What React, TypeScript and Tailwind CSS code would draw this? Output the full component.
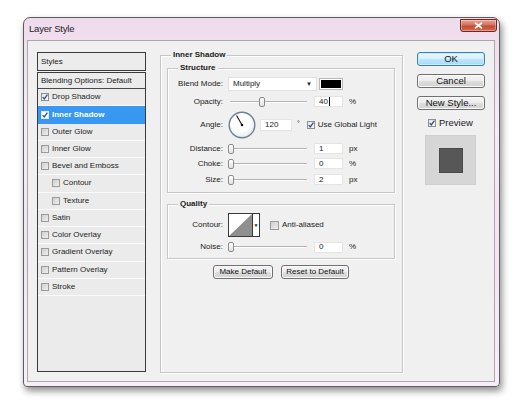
const EFFECTS = [
  { label: "Drop Shadow", on: true },
  { label: "Inner Shadow", on: true, active: true },
  { label: "Outer Glow" },
  { label: "Inner Glow" },
  { label: "Bevel and Emboss" },
  { label: "Contour", sub: true },
  { label: "Texture", sub: true },
  { label: "Satin" },
  { label: "Color Overlay" },
  { label: "Gradient Overlay" },
  { label: "Pattern Overlay" },
  { label: "Stroke" },
];

function Check({ on, light }: { on?: boolean; light?: boolean }) {
  return (
    <span
      className={
        light
          ? "flex h-[8px] w-[8px] shrink-0 items-center justify-center border border-[#dfe9f5] bg-white"
          : on
            ? "flex h-[8px] w-[8px] shrink-0 items-center justify-center border border-[#8e8f8f] bg-[linear-gradient(135deg,#e6e6e6,#fbfbfb)]"
            : "flex h-[8px] w-[8px] shrink-0 items-center justify-center border border-[#9a9a9a] bg-[linear-gradient(135deg,#cfcfcf,#efefef)]"
      }
    >
      {on && (
        <svg width="6" height="6" viewBox="0 0 6 6" aria-hidden="true">
          <path d="M0.7 3.1 L2.3 4.9 L5.4 0.6" stroke="#2b4f8f" strokeWidth="1.3" fill="none" />
        </svg>
      )}
    </span>
  );
}

function Btn({ children, primary, className }: { children: React.ReactNode; primary?: boolean; className: string }) {
  return (
    <div
      className={
        (primary
          ? "border-[#3c7fb1] bg-[linear-gradient(#eaf6fd_0%,#d9f0fc_48%,#bee6fd_52%,#a7d9f5_100%)] shadow-[inset_0_0_0_1px_#c4ecfc] "
          : "border-[#707070] bg-[linear-gradient(#f4f4f4_0%,#ececec_48%,#dedede_52%,#d2d2d2_100%)] shadow-[inset_0_0_0_1px_#fbfbfb] ") +
        "flex items-center justify-center rounded-[3px] border text-[#111] " +
        className
      }
    >
      {children}
    </div>
  );
}

function Group({ title, className, children }: { title: string; className: string; children: React.ReactNode }) {
  return (
    <div className={"relative border border-[#c6c6c6] shadow-[inset_1px_1px_0_#fff,1px_1px_0_#fff] " + className}>
      <span className="absolute top-[-6px] left-[10px] bg-[#f0f0f0] px-[2px] text-[8px] leading-[10px] font-bold text-[#1a1a1a]">
        {title}
      </span>
      {children}
    </div>
  );
}

function Field({ value, caret, className }: { value: string; caret?: boolean; className: string }) {
  return (
    <div className={"flex items-center border border-[#e4e4e4] bg-white pl-[4px] " + className}>
      <span>{value}</span>
      {caret && <span className="ml-[1px] h-[9px] w-px bg-black" />}
    </div>
  );
}

function Slider({ at }: { at: number }) {
  return (
    <div className="relative h-full w-[80px] shrink-0">
      <div className="absolute top-1/2 right-[1px] left-[2px] h-[2px] -translate-y-1/2 border-t border-[#b4b4b4] border-b border-b-white" />
      <span
        className="absolute top-1/2 h-[10px] w-[6px] -translate-y-1/2 rounded-[2px] border border-[#8c8c8c] bg-[linear-gradient(#ffffff,#e2e2e2)]"
        style={{ left: at }}
      />
    </div>
  );
}

function Row({ label, className, children }: { label: string; className: string; children: React.ReactNode }) {
  return (
    <div className={"flex items-center " + className}>
      <span className="w-[55px] shrink-0 text-right">{label}</span>
      <div className="ml-[5px] flex h-full items-center">{children}</div>
    </div>
  );
}

function SliderRow({ label, at, value, unit, caret, className }: { label: string; at: number; value: string; unit: string; caret?: boolean; className: string }) {
  return (
    <Row label={label} className={className}>
      <Slider at={at} />
      <Field value={value} caret={caret} className="ml-[6px] h-[11px] w-[29px]" />
      <span className="ml-[6px]">{unit}</span>
    </Row>
  );
}

function Dial() {
  return (
    <svg width="28" height="28" viewBox="0 0 28 28" aria-hidden="true">
      <defs>
        <radialGradient id="dialFill" cx="0.45" cy="0.4" r="0.6">
          <stop offset="0.6" stopColor="#ffffff" />
          <stop offset="1" stopColor="#e4e8ee" />
        </radialGradient>
      </defs>
      <circle cx="14" cy="14" r="12.8" fill="url(#dialFill)" stroke="#6e7f95" strokeWidth="1.4" />
      <line x1="14" y1="14" x2="8.6" y2="4.6" stroke="#111" strokeWidth="1.1" />
      <circle cx="14" cy="14" r="1.3" fill="#111" />
    </svg>
  );
}

export default function App() {
  return (
    <div className="h-[404px] w-[520px] overflow-hidden bg-white pt-[17px] pl-[23px] font-['Liberation_Sans',Arial,sans-serif] text-[8px] leading-none text-[#1b1b1b]">
      <div className="flex h-[370px] w-[477px] flex-col rounded-t-[7px] rounded-b-[4px] border border-[#5d5d5d] bg-[linear-gradient(180deg,#eedbec_0%,#f8ecf7_30%,#f5e3f3_60%,#f9eef8_100%)] shadow-[2px_4px_7px_rgba(0,0,0,0.45)]">
        {/* title bar */}
        <div className="flex h-[22px] shrink-0 items-start justify-between">
          <span className="pt-[6px] pl-[5px] text-[9.5px] tracking-[-0.2px] text-[#1e1e1e]">Layer Style</span>
          <div className="mt-px mr-[2px] flex h-[13px] w-[37px] items-center justify-center rounded-b-[3px] border border-[#6d2a22] bg-[linear-gradient(#e8a493_0%,#d4715c_45%,#c24b32_55%,#d46a4c_100%)] shadow-[inset_0_0_0_1px_rgba(255,255,255,0.35)]">
            <svg width="9" height="7" viewBox="0 0 9 7" aria-hidden="true">
              <path d="M1 0.8 L8 6.2 M8 0.8 L1 6.2" stroke="#fff" strokeWidth="1.8" />
            </svg>
          </div>
        </div>

        {/* dialog body */}
        <div className="mr-[4px] mb-[4px] ml-[3px] flex flex-1 items-start border border-[#a9a9a9] bg-[#f0f0f0] pt-[11px] pl-[9px]">
          {/* styles list */}
          <div className="flex w-[109px] shrink-0 flex-col">
            <div className="flex h-[19px] items-center border border-[#3b3b3b] bg-[#ececec] pl-[3px]">Styles</div>
            <div className="mt-px flex h-[300px] flex-col border border-[#3b3b3b] bg-[#ebebeb]">
              <div className="flex h-[16px] shrink-0 items-center border-b border-[#4a4a4a] pl-[3px]">Blending Options: Default</div>
              {EFFECTS.map((e) => (
                <div
                  key={e.label}
                  className={
                    (e.active ? "bg-[#3797f1] font-bold text-white " : "border-b border-[#f9f9f9] ") +
                    (e.sub ? "pl-[14px] " : "pl-[3px] ") +
                    "flex h-[17.25px] shrink-0 items-center"
                  }
                >
                  <Check on={e.on} light={e.active} />
                  <span className="ml-[3px]">{e.label}</span>
                </div>
              ))}
            </div>
          </div>

          {/* effect settings */}
          <Group title="Inner Shadow" className="mt-[3px] ml-[14px] flex h-[318px] w-[243px] shrink-0 flex-col pt-[12px] pr-[7px] pl-[6px]">
            <Group title="Structure" className="flex h-[125px] w-[228px] flex-col">
              <Row label="Blend Mode:" className="mt-[8px] h-[14px]">
                <div className="flex h-[14px] w-[89px] items-center justify-between border border-[#e2e2e2] bg-white pr-[4px] pl-[4px]">
                  <span>Multiply</span>
                  <span className="text-[6px]">▼</span>
                </div>
                <div className="ml-[2px] h-[12px] w-[24px] border border-[#b8b8b8] bg-black shadow-[inset_0_0_0_1px_#fff]" />
              </Row>
              <SliderRow label="Opacity:" at={31} value="40" unit="%" caret className="mt-[5px] h-[11px]" />
              <Row label="Angle:" className="mt-[4px] h-[28px]">
                <Dial />
                <Field value="120" className="ml-[4px] h-[12px] w-[32px]" />
                <span className="mb-[4px] ml-[5px] text-[7px]">°</span>
                <span className="ml-[7px] flex items-center">
                  <Check on />
                  <span className="ml-[3px]">Use Global Light</span>
                </span>
              </Row>
              <SliderRow label="Distance:" at={0} value="1" unit="px" className="mt-[4px] h-[11px]" />
              <SliderRow label="Choke:" at={0} value="0" unit="%" className="mt-[4px] h-[11px]" />
              <SliderRow label="Size:" at={0} value="2" unit="px" className="mt-[5px] h-[11px]" />
            </Group>

            <Group title="Quality" className="mt-[11px] flex h-[55px] w-[228px] flex-col">
              <Row label="Contour:" className="mt-[8px] h-[24px]">
                <div className="flex h-[24px] w-[32px] border border-[#3a3a3a] bg-white">
                  <svg width="23" height="22" viewBox="0 0 23 22" aria-hidden="true">
                    <polygon points="0,22 23,0 23,22" fill="#8f8f8f" />
                  </svg>
                  <div className="flex flex-1 items-center justify-center border-l border-[#3a3a3a] text-[5px]">▼</div>
                </div>
                <span className="ml-[10px] flex items-center">
                  <span className="h-[9px] w-[9px] border border-[#9a9a9a] bg-[linear-gradient(135deg,#cfcfcf,#efefef)]" />
                  <span className="ml-[3px]">Anti-aliased</span>
                </span>
              </Row>
              <SliderRow label="Noise:" at={0} value="0" unit="%" className="mt-[5px] h-[10px]" />
            </Group>

            <div className="mt-[6px] flex justify-center gap-[8px]">
              <Btn className="h-[14px] w-[60px]">Make Default</Btn>
              <Btn className="h-[14px] w-[68px]">Reset to Default</Btn>
            </div>
          </Group>

          {/* dialog buttons + preview */}
          <div className="ml-[14px] flex w-[68px] shrink-0 flex-col text-[9.5px]">
            <Btn primary className="h-[14px] w-[68px]">OK</Btn>
            <Btn className="mt-[8px] h-[14px] w-[68px]">Cancel</Btn>
            <Btn className="mt-[8px] h-[14px] w-[68px]">New Style...</Btn>
            <div className="mt-[8px] flex h-[10px] items-center pl-[11px]">
              <Check on />
              <span className="ml-[3px]">Preview</span>
            </div>
            <div className="mt-[7px] ml-[8px] flex h-[50px] w-[51px] items-center justify-center border border-[#cfcfcf] bg-[#d6d6d6]">
              <div className="h-[25px] w-[24px] border border-[#4a4a4a] bg-[#575757]" />
            </div>
          </div>
        </div>
      </div>
    </div>
  );
}
